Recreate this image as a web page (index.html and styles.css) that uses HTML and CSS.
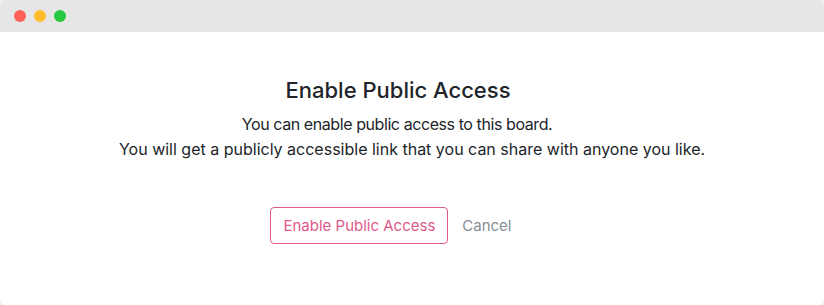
FILE: index.html
```html
<!DOCTYPE html>
<html>
<head>
<meta charset="utf-8">
<link rel="stylesheet" href="styles.css">
</head>
<body>
<div class="window">
  <div class="titlebar">
    <span class="dot red"></span>
    <span class="dot yellow"></span>
    <span class="dot green"></span>
  </div>
  <div class="content">
    <h1 class="title">Enable Public Access</h1>
    <div class="desc">
      <p class="line line-first">You can enable public access to this board.</p>
      <p class="line">You will get a publicly accessible link that you can share with anyone you like.</p>
    </div>
    <div class="actions">
      <button class="btn-primary">Enable Public Access</button>
      <button class="btn-cancel">Cancel</button>
    </div>
  </div>
</div>
</body>
</html>
```

FILE: styles.css
```css
html, body {
  margin: 0;
  padding: 0;
  background: #f0f0f0;
}
body {
  font-family: Inter, "Noto Sans", sans-serif;
  color: #212529;
}
.window {
  width: 824px;
  height: 305px;
  border-radius: 6px;
  overflow: hidden;
  background: #fff;
  box-sizing: border-box;
}
.titlebar {
  height: 32px;
  background: #e6e6e6;
  display: flex;
  align-items: center;
  gap: 8px;
  padding-left: 14px;
}
.dot {
  width: 12px;
  height: 12px;
  border-radius: 50%;
  display: block;
}
.red { background: #fe5f57; }
.yellow { background: #febc2e; }
.green { background: #28c840; }
.content {
  display: flex;
  flex-direction: column;
  align-items: center;
  text-align: center;
}
.title {
  margin: 44px 0 0;
  padding-right: 28px;
  font-size: 22px;
  font-weight: 550;
  line-height: 28px;
}
.desc {
  margin-top: 8px;
  display: flex;
  flex-direction: column;
  align-items: center;
}
.line {
  margin: 0;
  font-size: 16px;
  line-height: 25px;
}
.line-first {
  padding-right: 30px;
  letter-spacing: -0.42px;
}
.actions {
  margin-top: 45px;
  display: flex;
  align-items: center;
  gap: 6px;
  margin-right: 34px;
}
button {
  font-family: inherit;
  font-size: 15px;
  background: #fff;
  cursor: pointer;
}
.btn-primary {
  height: 37px;
  padding: 0 12px;
  border: 1px solid #e0598b;
  border-radius: 4px;
  color: #e0598b;
}
.btn-cancel {
  border: none;
  padding: 0 8px;
  height: 37px;
  color: #868e96;
}
```
